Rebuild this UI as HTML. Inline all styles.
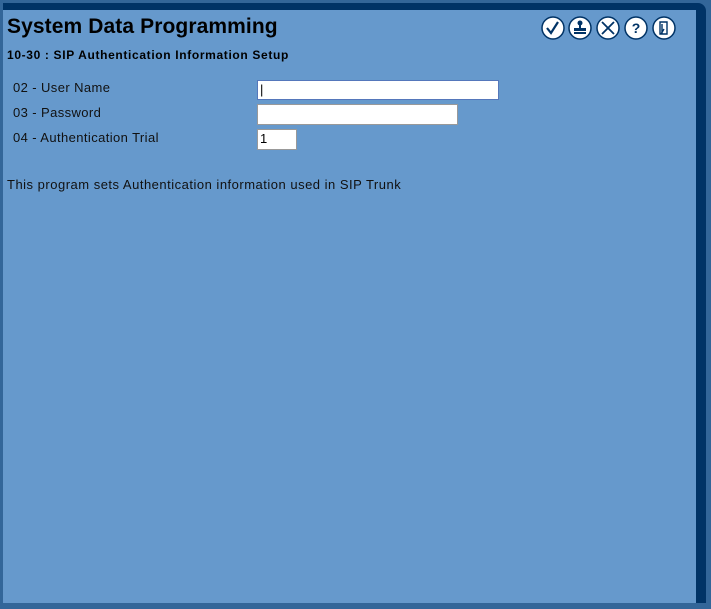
<!DOCTYPE html>
<html><head><style>
body{margin:0;width:711px;height:609px;background:#336699;position:relative;overflow:hidden;font-family:"Liberation Sans",sans-serif;}
.frame{position:absolute;left:3px;top:3px;width:703px;height:600px;background:#003366;border-radius:0 8px 0 0;}
.panel{position:absolute;left:3px;top:10px;width:693px;height:593px;background:#6699cc;}
.t{position:absolute;left:7px;top:15px;font-size:21px;font-weight:bold;color:#000;letter-spacing:0.1px;}
.s{position:absolute;left:7px;top:48px;font-size:12px;font-weight:bold;color:#000;letter-spacing:0.65px;}
.l{position:absolute;left:13px;font-size:13px;color:#111;letter-spacing:0.4px;}
.in{position:absolute;left:257px;background:#fff;border:1px solid #999;box-sizing:border-box;font-size:13px;padding-left:2px;line-height:18px;}
.d{position:absolute;left:7px;top:177px;font-size:13px;color:#111;letter-spacing:0.5px;}
svg{position:absolute;top:16px;left:540px;}
</style></head><body>
<div class="frame"></div><div class="panel"></div>
<div class="t">System Data Programming</div>
<div class="s">10-30 : SIP Authentication Information Setup</div>
<div class="l" style="top:80px">02 - User Name</div>
<div class="l" style="top:105px">03 - Password</div>
<div class="l" style="top:130px">04 - Authentication Trial</div>
<div class="in" style="top:80px;width:242px;height:20px;border-color:#5577bb">|</div>
<div class="in" style="top:104px;width:201px;height:21px"></div>
<div class="in" style="top:129px;width:40px;height:21px">1</div>
<div class="d">This program sets Authentication information used in SIP Trunk</div>
<svg width="140" height="26" viewBox="0 0 140 26">
<g fill="#fff" stroke="#003366" stroke-width="1.5">
<circle cx="13" cy="12" r="11"/><circle cx="40" cy="12" r="11"/><circle cx="68" cy="12" r="11"/><circle cx="96" cy="12" r="11"/><circle cx="124" cy="12" r="11"/></g>
<path d="M7 12l4 5l7-11" fill="none" stroke="#003366" stroke-width="2.2"/>
<g fill="#003366"><circle cx="40" cy="7" r="2.5"/><rect x="39" y="9" width="2" height="3"/><rect x="34" y="12" width="12" height="3"/><rect x="34" y="16" width="12" height="2"/></g>
<path d="M62 6l12 12M74 6l-12 12" stroke="#003366" stroke-width="1.8"/>
<text x="96" y="17" font-size="14" font-weight="bold" text-anchor="middle" fill="#003366" font-family="Liberation Sans">?</text>
<path d="M120 6h7v12h-7zM122 8v10M124 13l-3 5" fill="none" stroke="#003366" stroke-width="1.4"/>
</svg>
</body></html>
